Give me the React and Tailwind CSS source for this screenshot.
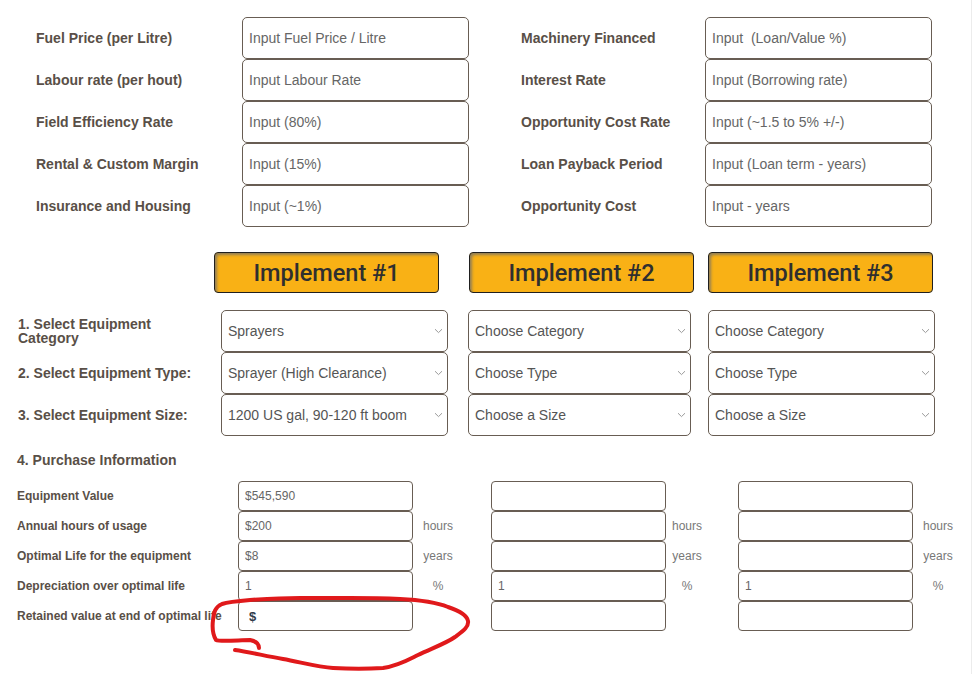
import React from 'react';

const FONT = { fontFamily: '"Liberation Sans", Arial, sans-serif' };

const TOP_LEFT = [
  ['Fuel Price (per Litre)', 'Input Fuel Price / Litre'],
  ['Labour rate (per hout)', 'Input Labour Rate'],
  ['Field Efficiency Rate', 'Input (80%)'],
  ['Rental & Custom Margin', 'Input (15%)'],
  ['Insurance and Housing', 'Input (~1%)'],
];

const TOP_RIGHT = [
  ['Machinery Financed', 'Input  (Loan/Value %)'],
  ['Interest Rate', 'Input (Borrowing rate)'],
  ['Opportunity Cost Rate', 'Input (~1.5 to 5% +/-)'],
  ['Loan Payback Period', 'Input (Loan term - years)'],
  ['Opportunity Cost', 'Input - years'],
];

const SELECT_ROWS = [
  { label: '1. Select Equipment Category', values: ['Sprayers', 'Choose Category', 'Choose Category'] },
  { label: '2. Select Equipment Type:', values: ['Sprayer (High Clearance)', 'Choose Type', 'Choose Type'] },
  { label: '3. Select Equipment Size:', values: ['1200 US gal, 90-120 ft boom', 'Choose a Size', 'Choose a Size'] },
];

const PURCHASE_ROWS = [
  { label: 'Equipment Value', first: '$545,590', others: '', unit: '' },
  { label: 'Annual hours of usage', first: '$200', others: '', unit: 'hours' },
  { label: 'Optimal Life for the equipment', first: '$8', others: '', unit: 'years' },
  { label: 'Depreciation over optimal life', first: '1', others: '1', unit: '%' },
  { label: 'Retained value at end of optimal life', first: '', others: '', unit: '' },
];

const TopField = ({ label, placeholder, labelWidth }) => (
  <div className="flex items-center">
    <div className={`${labelWidth} text-[14px] font-bold text-[#594f47]`}>{label}</div>
    <input
      readOnly
      placeholder={placeholder}
      className="w-[227px] h-[42px] rounded-[5px] border border-[#685d53] bg-white px-[6px] text-[14px] text-[#555] placeholder:text-[#666] outline-none"
    />
  </div>
);

const Chevron = () => (
  <svg className="absolute right-[4px] top-1/2 -translate-y-1/2" width="9" height="6" viewBox="0 0 9 6">
    <path d="M1 1.2 L4.5 4.6 L8 1.2" fill="none" stroke="#9a9a9a" strokeWidth="1" />
  </svg>
);

const SelectBox = ({ value, width, margin }) => (
  <div className={`relative ${width} ${margin} h-[42px] rounded-[5px] border border-[#685d53] bg-white flex items-center pl-[6px] text-[14px] text-[#555]`}>
    {value}
    <Chevron />
  </div>
);

const ImplementButton = ({ n, margin }) => (
  <div
    className={`${margin} w-[225px] h-[41px] pt-[3px] rounded-[4px] border border-[#1f1f1f] bg-[#f9b115] shadow-[inset_2px_2px_3px_rgba(110,110,110,0.75)] flex items-center justify-center text-[23.5px] font-medium text-[#2f2f2f]`}
    style={{ fontFamily: 'Roboto, "Liberation Sans", sans-serif' }}
  >
    Implement #{n}
  </div>
);

const SmallInput = ({ value, bold }) => (
  <input
    readOnly
    value={value}
    className={`w-[175px] h-[30px] shrink-0 rounded-[4px] border border-[#685d53] bg-white outline-none ${
      bold ? 'pl-[10px] text-[13px] font-bold text-[#2f3b4a]' : 'pl-[6px] text-[12px] text-[#666]'
    }`}
  />
);

const App = () => {
  return (
    <div className="relative min-h-screen w-full bg-white border-r border-[#ececec]" style={FONT}>
      {/* general inputs */}
      <div className="flex pl-[36px] pt-[17px]">
        <div>
          {TOP_LEFT.map(([l, p]) => (
            <TopField key={l} label={l} placeholder={p} labelWidth="w-[206px]" />
          ))}
        </div>
        <div className="ml-[52px]">
          {TOP_RIGHT.map(([l, p]) => (
            <TopField key={l} label={l} placeholder={p} labelWidth="w-[184px]" />
          ))}
        </div>
      </div>

      {/* implement headers */}
      <div className="flex mt-[25px]">
        <ImplementButton n={1} margin="ml-[214px]" />
        <ImplementButton n={2} margin="ml-[30px]" />
        <ImplementButton n={3} margin="ml-[14px]" />
      </div>

      {/* equipment selects */}
      <div className="mt-[17px]">
        {SELECT_ROWS.map((row) => (
          <div key={row.label} className="flex items-center">
            <div className="w-[221px] pl-[18px]">
              <div className="w-[185px] text-[14px] leading-[14px] font-bold text-[#594f47]">{row.label}</div>
            </div>
            <SelectBox value={row.values[0]} width="w-[227px]" margin="" />
            <SelectBox value={row.values[1]} width="w-[223px]" margin="ml-[20px]" />
            <SelectBox value={row.values[2]} width="w-[227px]" margin="ml-[17px]" />
          </div>
        ))}
      </div>

      {/* purchase information */}
      <div className="pl-[17px] mt-[17px] text-[14px] leading-[14px] font-bold text-[#594f47]">4. Purchase Information</div>
      <div className="mt-[14px]">
        {PURCHASE_ROWS.map((row, i) => {
          const last = i === PURCHASE_ROWS.length - 1;
          return (
            <div key={row.label} className="flex items-center">
              <div className="w-[238px] shrink-0 pl-[17px] whitespace-nowrap text-[12px] font-bold text-[#594f47]">{row.label}</div>
              <SmallInput value={last ? '$' : row.first} bold={last} />
              <div className="w-[50px] shrink-0 text-center text-[12px] text-[#777]">{row.unit}</div>
              <div className="ml-[28px]">
                <SmallInput value={row.others} />
              </div>
              <div className="w-[42px] shrink-0 text-center text-[12px] text-[#777]">{row.unit}</div>
              <div className="ml-[30px]">
                <SmallInput value={row.others} />
              </div>
              <div className="w-[50px] shrink-0 text-center text-[12px] text-[#777]">{row.unit}</div>
            </div>
          );
        })}
      </div>

      {/* hand-drawn annotation */}
      <svg className="pointer-events-none absolute left-0 top-0" width="972" height="674" viewBox="0 0 972 674">
        <path
          d="M235 650 C250 652 265 656 283 659 C300 662 318 667 333 668 C350 669 368 669 383 668 C398 666 408 660 418 655 C430 649 445 644 455 637 C463 631 469 627 468 621 C467 615 460 611 448 607 C438 603 420 600 400 599 C380 598 365 598 350 598 C330 598 315 598 300 598 C280 598 265 599 250 600 C238 601 228 602 222 604 C215 607 214 612 213 620 C212 628 213 635 216 640 C220 642 240 640 250 640 C256 641 259 643 259 648"
          fill="none"
          stroke="#e0191b"
          strokeWidth="4"
          strokeLinecap="round"
          strokeLinejoin="round"
        />
      </svg>
    </div>
  );
};

export default App;
